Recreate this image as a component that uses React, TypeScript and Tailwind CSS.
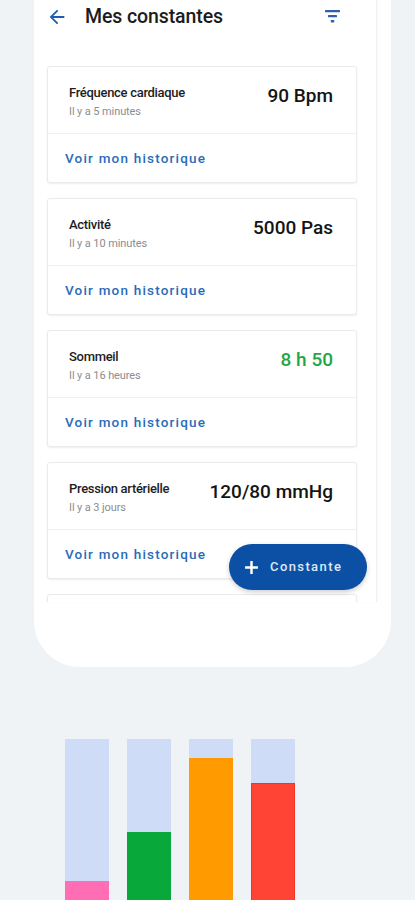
import React from "react";

type Item = { title: string; sub: string; value: string; green?: boolean };

const items: Item[] = [
  { title: "Fréquence cardiaque", sub: "Il y a 5 minutes", value: "90 Bpm" },
  { title: "Activité", sub: "Il y a 10 minutes", value: "5000 Pas" },
  { title: "Sommeil", sub: "Il y a 16 heures", value: "8 h 50", green: true },
  { title: "Pression artérielle", sub: "Il y a 3 jours", value: "120/80 mmHg" },
];

function Card({ it }: { it: Item }) {
  return (
    <div className="w-[310px] h-[117px] shrink-0 bg-white border border-[#e9ebee] rounded-[3px] shadow-[0_1px_2px_rgba(0,0,0,0.07)] flex flex-col">
      <div className="h-[67px] flex items-start justify-between pl-[21px] pr-[23px] border-b border-[#eef0f2]">
        <div className="flex flex-col pt-[18px]">
          <span className="text-[13px] leading-[16px] font-medium text-[#1d1d1f] tracking-[-0.3px]">{it.title}</span>
          <span className="text-[11px] leading-[14px] mt-[4px] text-[#8b8d90] tracking-[-0.1px]">{it.sub}</span>
        </div>
        <span
          className={
            "pt-[17px] text-[19px] leading-[24px] font-medium " +
            (it.green ? "text-[#1fa647]" : "text-[#141414]")
          }
        >
          {it.value}
        </span>
      </div>
      <div className="flex-1 flex items-center pl-[17px]">
        <span className="text-[13.5px] font-medium tracking-[1.2px] text-[#2a6cba]">Voir mon historique</span>
      </div>
    </div>
  );
}

const bars = [
  { fill: "h-[28px] bg-[#ff6db4]" },
  { fill: "h-[77px] bg-[#08a93a]" },
  { fill: "h-[151px] bg-[#ff9a00]" },
  { fill: "h-[126px] bg-[#ff4436] border border-[#f03424]" },
];

export default function App() {
  return (
    <div
      className="w-[415px] h-[900px] overflow-hidden bg-[#eff3f6] flex flex-col"
      style={{ fontFamily: "Roboto, 'Noto Sans', sans-serif" }}
    >
      <div className="ml-[34px] w-[357px] h-[667px] shrink-0 bg-white rounded-b-[46px] relative">
        <div className="w-[343px] h-[602px] overflow-hidden border-r border-[#eef1f4] shadow-[2px_0_4px_rgba(0,0,0,0.025)] flex flex-col">
          <div className="h-[33px] shrink-0 flex items-center pl-[12px] pr-[36px]">
            <svg width="22" height="22" viewBox="0 0 24 24" className="shrink-0">
              <path fill="#1b5db3" d="M20 11H7.83l5.59-5.59L12 4l-8 8 8 8 1.41-1.41L7.83 13H20v-2z" />
            </svg>
            <span className="ml-[17px] text-[19.5px] font-medium text-[#1c1c1c] tracking-[-0.1px]">Mes constantes</span>
            <svg width="15" height="13" viewBox="0 0 15 13" className="ml-auto mb-[1px]">
              <rect x="0" y="0" width="15" height="2.2" rx="0.5" fill="#2f5fae" />
              <rect x="3" y="5" width="9" height="2.2" rx="0.5" fill="#2f5fae" />
              <rect x="5.8" y="10" width="3.4" height="2.4" rx="0.6" fill="#2f5fae" />
            </svg>
          </div>
          <div className="mt-[33px] pl-[13px] flex flex-col gap-[15px]">
            {items.map((it, i) => (
              <Card key={i} it={it} />
            ))}
            <div className="w-[310px] h-[117px] shrink-0 bg-white border border-[#e9ebee] rounded-[3px] shadow-[0_1px_2px_rgba(0,0,0,0.07)]" />
          </div>
        </div>
        <button className="absolute left-[195px] top-[544px] w-[138px] h-[46px] rounded-full bg-[#0c50a5] shadow-[0_2px_5px_rgba(0,0,0,0.2)] flex items-center pl-[15px]">
          <svg width="15" height="15" viewBox="0 0 14 14">
            <path d="M7 1v12M1 7h12" stroke="#ffffff" strokeWidth="2.3" />
          </svg>
          <span className="ml-[11px] text-[13px] font-medium tracking-[1.4px] text-[#dce8f7]">Constante</span>
        </button>
      </div>
      <div className="mt-[72px] ml-[65px] flex gap-[18px] items-start">
        {bars.map((b, i) => (
          <div key={i} className="w-[44px] h-[170px] bg-[#cfdcf8] flex flex-col justify-end">
            <div className={"w-full " + b.fill} />
          </div>
        ))}
      </div>
    </div>
  );
}
